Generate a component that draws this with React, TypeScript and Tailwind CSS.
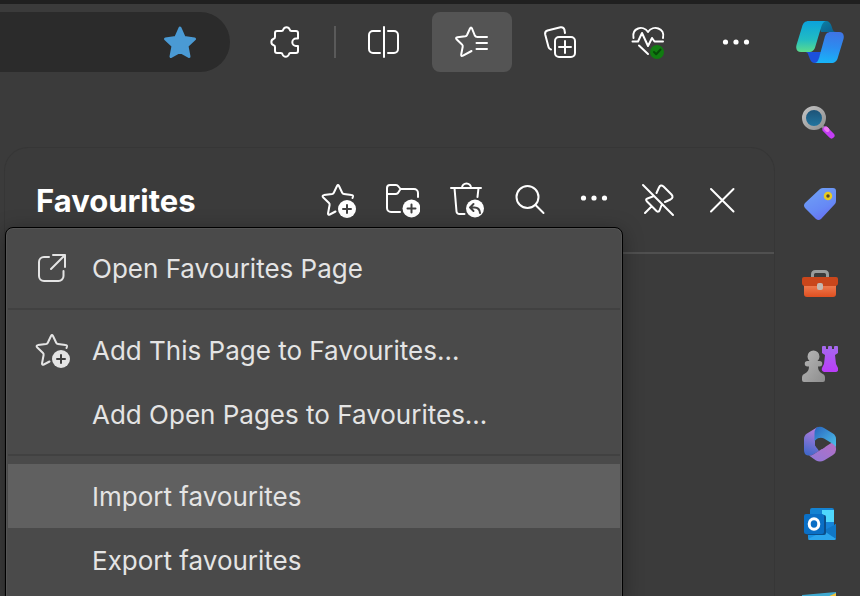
import type { ReactNode } from "react";

type IconProps = { className?: string };

const line = {
  fill: "none",
  stroke: "currentColor",
  strokeWidth: 2,
  strokeLinecap: "round",
  strokeLinejoin: "round",
} as const;

/* Toolbar icons */
const PuzzleIcon = () => (
  <svg viewBox="0 0 36 36" className="size-9" {...line}>
    <path d="M9 7h4.500q1.500 0 1.800-1.500a3.400 3.400 0 0 1 6.400 0Q22 7 23.500 7H28a2 2 0 0 1 2 2v5.500h-2a3.700 3.700 0 0 0 0 7.400h2V27a2 2 0 0 1-2 2h-5.500q-1.300 0-1.700 1.500a3.300 3.300 0 0 1-6.200 0Q14.200 29 12.900 29H9a2 2 0 0 1-2-2v-4q0-1.300-1.300-1.700a3.500 3.500 0 0 1 0-6.600Q7 14.300 7 13V9a2 2 0 0 1 2-2z" />
  </svg>
);

const SplitIcon = () => (
  <svg viewBox="0 0 36 36" className="size-9" {...line}>
    <path d="M18 3v30M14 7H7a4 4 0 0 0-4 4v14a4 4 0 0 0 4 4h7M22 7h6a4 4 0 0 1 4 4v14a4 4 0 0 1-4 4h-6" />
  </svg>
);

const StarListIcon = () => (
  <svg viewBox="0 0 36 36" className="size-9" {...line}>
    <path d="M33 13H23.500Q21.500 13 20.800 11.500L18 4.500Q17 2.500 16 4.500L13 11Q12.500 12 11.400 12.200L3.500 13.300Q1 13.800 2.800 15.600L8 20.500Q9 21.300 8.700 22.700L7.200 30.500Q7 32.600 9 31.600L17.500 27M22.500 19H33M22.500 25H33" />
  </svg>
);

const CollectionsIcon = () => (
  <svg viewBox="0 0 36 36" className="size-9" {...line}>
    <rect x="13" y="13" width="20" height="20" rx="4" />
    <path d="M23 17v12M17 23h12M9 25.500Q7 25 6.500 23L3.200 10.500Q2.500 7.500 5.500 6.500L18.500 3.300Q21.500 2.800 22.400 5.500L23 9" />
  </svg>
);

const HealthIcon = () => (
  <svg viewBox="0 0 36 36" className="size-9" {...line}>
    <path d="M3.500 14C1.500 4 13 .5 18 8C23 .5 35.500 4 33 14M2.500 17.500H8l4-8.500 6 13 4-8 2.500 3.500h8.500M9 21.500l9 8.500" />
    <circle cx="27" cy="28" r="7" fill="#107c10" stroke="none" />
    <path d="M24 28l2.200 2.200L30.500 25.500" stroke="#064b08" />
  </svg>
);

const DotsIcon = () => (
  <svg viewBox="0 0 36 36" className="size-9" fill="currentColor">
    <circle cx="7.500" cy="18" r="2.600" />
    <circle cx="18" cy="18" r="2.600" />
    <circle cx="28.500" cy="18" r="2.600" />
  </svg>
);

/* Panel icons */
const StarAddIcon = ({ className = "size-9" }: IconProps) => (
  <svg viewBox="0 0 36 36" className={className} {...line}>
    <path d="M32.500 16L33 14.500Q33.200 13.300 31.500 13.100L24 12Q22.800 11.800 22.200 10.700L19 4Q18 2.200 17 4L13.800 10.700Q13.200 11.800 12 12L4 13.100Q1.600 13.700 3.300 15.500L9 21Q9.800 21.800 9.600 23L8 31.500Q8 33.400 9.800 32.500L15.500 29.500" />
    <circle cx="27" cy="27" r="9" fill="currentColor" stroke="none" />
    <path d="M27 23v8M23 27h8" className="stroke-[#404040]" />
  </svg>
);

const FolderAddIcon = () => (
  <svg viewBox="0 0 36 36" className="size-9" {...line}>
    <path d="M3 12h8.500Q13 12 14 11l2.500-4H30a4 4 0 0 1 4 4v4M16.500 7l-2-2.500Q13.500 3 12 3H6a3 3 0 0 0-3 3v20a4 4 0 0 0 4 4h9" />
    <circle cx="27.500" cy="26.500" r="9" fill="currentColor" stroke="none" />
    <path d="M27.500 22.500v8M23.500 26.500h8" className="stroke-[#404040]" />
  </svg>
);

const TrashUndoIcon = () => (
  <svg viewBox="0 0 36 36" className="size-9" {...line}>
    <path d="M3 6h30M14 6a4.500 4.500 0 0 1 9 0M6.500 6l2 23.500Q8.800 32 11.500 32h5M30.500 6l-1 9" />
    <circle cx="27" cy="26.500" r="9" fill="currentColor" stroke="none" />
    <path d="M25.500 22L22 25.500l3.500 3.500M22 25.500h4.500Q31.500 25.500 32 31" className="stroke-[#404040]" />
  </svg>
);

const SearchIcon = () => (
  <svg viewBox="0 0 36 36" className="size-9" {...line}>
    <circle cx="15.500" cy="15" r="11" />
    <path d="M23.500 23L31.500 31" />
  </svg>
);

const MoreIcon = () => (
  <svg viewBox="0 0 36 36" className="size-9" fill="currentColor">
    <circle cx="7.500" cy="16" r="2.600" />
    <circle cx="18" cy="16" r="2.600" />
    <circle cx="28.500" cy="16" r="2.600" />
  </svg>
);

const UnpinIcon = () => (
  <svg viewBox="0 0 36 36" className="size-9" {...line}>
    <path d="M3 3l30 30M16.500 11l2.500-5.500Q20.500 2 23.500 4.500L31.500 12.500Q34 15.500 30.500 17.500L25 20M14 14l-6.500 2.500Q5 17.500 7 19.500L16.500 29Q18.500 30.500 19.500 28.500L22 22M11.500 24.500L5 31" />
  </svg>
);

const CloseIcon = () => (
  <svg viewBox="0 0 36 36" className="size-9" {...line}>
    <path d="M7 7l22.500 22.500M29.500 7L7 29.500" />
  </svg>
);

const OpenIcon = () => (
  <svg viewBox="0 0 36 36" className="size-9" {...line}>
    <path d="M15 7H10a5 5 0 0 0-5 5v14a5 5 0 0 0 5 5h14.500a5 5 0 0 0 5-5v-5M19 5h12v12M31 5L17 19" />
  </svg>
);

/* Sidebar icons */
const CopilotIcon = () => (
  <svg viewBox="0 0 48 44" className="h-11 w-12">
    <defs>
      <linearGradient id="cpLeft" x1=".5" y1="0" x2=".5" y2="1">
        <stop offset="0" stopColor="#0ba2dc" />
        <stop offset=".6" stopColor="#22bcc2" />
        <stop offset="1" stopColor="#5cdb8c" />
      </linearGradient>
      <linearGradient id="cpRight" x1=".6" y1="0" x2=".5" y2="1">
        <stop offset="0" stopColor="#3f74e4" />
        <stop offset=".5" stopColor="#2c8cf0" />
        <stop offset="1" stopColor="#18b4f8" />
      </linearGradient>
      <linearGradient id="cpTop" x1="0" y1="0" x2="1" y2="1">
        <stop offset="0" stopColor="#0b83a6" />
        <stop offset="1" stopColor="#0c5c8c" />
      </linearGradient>
    </defs>
    <path d="M22 1h8c3 0 4.500 2 5.500 5l1 3c.6 2 1.500 3 4 3H25z" fill="url(#cpTop)" />
    <path d="M8 32h17l-3 11h-3c-3 0-4.500-2-5.500-5l-1.500-4c-.5-1.500-1.500-2-4-2z" fill="#1c50dc" />
    <path d="M13 1h18c-3 0-4.500 2-5.500 5l-6 20c-1 4-3 6-7 6H5c-4 0-5.500-3-4.500-7L6 7c1-4 3-6 7-6z" fill="url(#cpLeft)" />
    <path d="M35 12h8c4 0 5.500 3 4.500 7L42 37c-1 4-3 6-7 6H18c3 0 4-2 5-5l5.500-20c1-4 2.500-6 6.500-6z" fill="url(#cpRight)" />
  </svg>
);

const LensIcon = () => (
  <svg viewBox="0 0 36 36" className="size-9">
    <defs>
      <linearGradient id="lensRim" x1="0" y1="0" x2="1" y2="1">
        <stop offset="0" stopColor="#c0c0c0" />
        <stop offset="1" stopColor="#929292" />
      </linearGradient>
      <linearGradient id="lensGlass" x1="0" y1="0" x2="0" y2="1">
        <stop offset="0" stopColor="#1c4f72" />
        <stop offset="1" stopColor="#2279a4" />
      </linearGradient>
    </defs>
    <path d="M18.500 18.500l4 4" stroke="#8d8d8d" strokeWidth="3" />
    <circle cx="12" cy="12" r="10" fill="url(#lensGlass)" stroke="url(#lensRim)" strokeWidth="4" />
    <path d="M23.500 23.500l6 6" stroke="#c43df5" strokeWidth="6" strokeLinecap="round" />
    <path d="M24 22.500l1.500 1.500" stroke="#ee79f5" strokeWidth="4" strokeLinecap="round" />
  </svg>
);

const TagIcon = () => (
  <svg viewBox="0 0 36 36" className="size-9">
    <defs>
      <linearGradient id="tagBody" x1=".3" y1="0" x2=".8" y2="1">
        <stop offset="0" stopColor="#6f9ff5" />
        <stop offset=".6" stopColor="#6689f5" />
        <stop offset="1" stopColor="#676af2" />
      </linearGradient>
    </defs>
    <path d="M18 3Q19.500 2 21 2h10q3 0 3 3v10q0 2-1.500 3.500L19 33q-2.500 2-5 0L3 22q-2-2.500 0-5z" fill="url(#tagBody)" />
    <circle cx="26" cy="10" r="3" fill="#574a2d" stroke="#e8cb20" strokeWidth="2.500" />
  </svg>
);

const ToolboxIcon = () => (
  <svg viewBox="0 0 36 36" className="size-9">
    <defs>
      <linearGradient id="boxBody" x1="0" y1="0" x2="0" y2="1">
        <stop offset="0" stopColor="#ef8055" />
        <stop offset="1" stopColor="#df4f20" />
      </linearGradient>
    </defs>
    <path d="M10.500 13V8.500Q10.500 5.500 13.500 5.500h9q3 0 3 3V13" fill="none" stroke="#999c9c" strokeWidth="3" />
    <path d="M2 18h32v10q0 3-3 3H5q-3 0-3-3z" fill="url(#boxBody)" />
    <path d="M2 11h32q2 0 2 2v4q0 3-3 3H3q-3 0-3-3v-4q0-2 2-2z" fill="#c9461b" />
    <rect x="15" y="17" width="6" height="7" rx="2" fill="#c3b8b1" />
  </svg>
);

const ChessIcon = () => (
  <svg viewBox="0 0 36 36" className="size-9">
    <defs>
      <linearGradient id="rook" x1="0" y1="0" x2="0" y2="1">
        <stop offset="0" stopColor="#a56bee" />
        <stop offset="1" stopColor="#ba3cf9" />
      </linearGradient>
      <linearGradient id="pawn" x1="0" y1="0" x2="1" y2="1">
        <stop offset="0" stopColor="#b8b8b8" />
        <stop offset="1" stopColor="#8d8d8d" />
      </linearGradient>
    </defs>
    <path d="M20 1q0-1 1-1h2q1 0 1 1v2h2V1q0-1 1-1h2q1 0 1 1v2h2V1q0-1 1-1h2q1 0 1 1v6l-3 2 1 9 2 4q1 3-2 4H22q-3-1-2-4l2-4 1-9-3-2z" fill="url(#rook)" />
    <path d="M7.500 15a6 6 0 1 1 8 0h2a2.500 2.500 0 0 1 0 5.500H16q0 5 4 7 3 1 3 4V34q0 2-2 2H2q-2 0-2-2v-2.500q0-3 3-4 4-2 4-7H5.500a2.500 2.500 0 0 1 0-5.500z" fill="url(#pawn)" />
  </svg>
);

const OfficeIcon = () => (
  <svg viewBox="0 0 36 36" className="size-9">
    <defs>
      <linearGradient id="ofLeft" x1=".5" y1="0" x2=".3" y2="1">
        <stop offset="0" stopColor="#b47ddd" />
        <stop offset="1" stopColor="#3f67c9" />
      </linearGradient>
      <linearGradient id="ofRight" x1="0" y1="0" x2="1" y2="1">
        <stop offset="0" stopColor="#2864be" />
        <stop offset="1" stopColor="#4fc4ec" />
      </linearGradient>
      <linearGradient id="ofBottom" x1="0" y1="1" x2="1" y2="0">
        <stop offset="0" stopColor="#8e78d8" />
        <stop offset="1" stopColor="#b66fc4" />
      </linearGradient>
    </defs>
    <path d="M14 2L5 7.500Q2 9.500 2 13v11q0 5 4 5.500 3 .5 6-1.500l5-3-4-6V8q0-4 3-7.200z" fill="url(#ofLeft)" />
    <path d="M7 29.500q3 0 5-1.500l18-11.500q4 2 4 6V24q0 3-3 5l-9 5.500q-4 2-8 0z" fill="url(#ofBottom)" />
    <path d="M14 2q4-2.500 8 0l9 5.500q3 2 3 5.500v9q0-2-3-4l-9-5.500Q17 10 12.500 15V8q0-4 1.500-6z" fill="url(#ofRight)" />
    <circle cx="18.500" cy="17.500" r="5.500" fill="#3b3b3b" />
  </svg>
);

const OutlookIcon = () => (
  <svg viewBox="0 0 36 36" className="size-9">
    <path d="M8 4q0-2 2-2h20q2 0 2 2v18H8z" fill="#1483d2" />
    <path d="M20 4h12v12H20z" fill="#4fd8fd" />
    <path d="M20 16h12v8H20z" fill="#1683d8" />
    <path d="M6 18l16 8 12-8v14q0 2-2 2H8q-2 0-2-2z" fill="#1a91e2" />
    <path d="M34 18v15L21 25z" fill="#1077c6" />
    <path d="M6 33l16-8 12 8q-1 1-2 1H8q-1 0-2-1z" fill="#2ba5ec" />
    <rect x="4" y="9" width="20" height="20" rx="2" fill="#0b4f8b" />
    <rect x="2" y="8" width="20" height="20" rx="2" fill="#0a6fc5" />
    <ellipse cx="12" cy="18" rx="4.800" ry="5.200" fill="none" stroke="#fff" strokeWidth="3" />
  </svg>
);

const DropIcon = () => (
  <svg viewBox="0 0 36 36" className="size-9">
    <path d="M0 9L34 6v24L0 33z" fill="#3fa9d0" />
    <path d="M23 12L34 7v5L25 18z" fill="#f2c238" />
  </svg>
);

const actions: { label: string; icon: ReactNode; active?: boolean }[] = [
  { label: "Split screen", icon: <SplitIcon /> },
  { label: "Favourites", icon: <StarListIcon />, active: true },
  { label: "Collections", icon: <CollectionsIcon /> },
  { label: "Browser essentials", icon: <HealthIcon /> },
  { label: "Settings and more", icon: <DotsIcon /> },
];

const panelActions = [
  { label: "Add this page", icon: <StarAddIcon /> },
  { label: "Add folder", icon: <FolderAddIcon /> },
  { label: "Restore deleted", icon: <TrashUndoIcon /> },
  { label: "Search favourites", icon: <SearchIcon /> },
  { label: "More options", icon: <MoreIcon /> },
  { label: "Unpin", icon: <UnpinIcon /> },
  { label: "Close", icon: <CloseIcon /> },
];

const apps = [
  { label: "Search", icon: <LensIcon /> },
  { label: "Shopping", icon: <TagIcon /> },
  { label: "Tools", icon: <ToolboxIcon /> },
  { label: "Games", icon: <ChessIcon /> },
  { label: "Microsoft 365", icon: <OfficeIcon /> },
  { label: "Outlook", icon: <OutlookIcon /> },
  { label: "Drop", icon: <DropIcon /> },
];

function Toolbar() {
  return (
    <div className="flex items-center gap-2 pt-2 pr-1">
      {/* Address bar */}
      <div className="mr-2 flex h-15 flex-1 items-center justify-end rounded-r-full bg-[#2b2b2b] pr-8">
        <button aria-label="Edit favourite">
          <svg viewBox="0 0 36 36" className="size-9" fill="#4a9ad4" stroke="#4a9ad4" strokeWidth="3" strokeLinejoin="round">
            <path d="M18 4l4.200 9.500L32.500 15l-7.500 7 2 10.500L18 27.500 9 32.500 11 22 3.500 15l10.300-1.500z" />
          </svg>
        </button>
      </div>
      <button aria-label="Extensions" className="flex h-15 w-20 items-center justify-center">
        <PuzzleIcon />
      </button>
      <div className="h-8 w-0.5 bg-[#5a5a5a]" />
      {actions.map((a) => (
        <button
          key={a.label}
          aria-label={a.label}
          className={`flex h-15 w-20 items-center justify-center rounded-lg ${a.active ? "bg-[#545454]" : ""}`}
        >
          {a.icon}
        </button>
      ))}
    </div>
  );
}

function MenuItem({ icon, active, children }: { icon?: ReactNode; active?: boolean; children: ReactNode }) {
  return (
    <button
      role="menuitem"
      className={`flex h-16 w-full items-center gap-[22px] pl-[26px] text-left text-[26px] text-[#e4e4e4] ${active ? "bg-[#606060]" : ""}`}
    >
      <span className="size-9">{icon}</span>
      <span>{children}</span>
    </button>
  );
}

function FavouritesMenu() {
  return (
    <div
      role="menu"
      className="absolute top-[79px] left-0 w-[618px] rounded-t-lg border border-black bg-[#4a4a4a] px-0.5 py-2 shadow-[0_4px_20px_rgba(0,0,0,0.35)] inset-ring inset-ring-[#545454]"
    >
      <MenuItem icon={<OpenIcon />}>Open Favourites Page</MenuItem>
      <hr className="my-2 border-t-2 border-[#414141]" />
      <MenuItem icon={<StarAddIcon />}>Add This Page to Favourites…</MenuItem>
      <MenuItem>Add Open Pages to Favourites…</MenuItem>
      <hr className="my-2 border-t-2 border-[#414141]" />
      <MenuItem active>Import favourites</MenuItem>
      <MenuItem>Export favourites</MenuItem>
    </div>
  );
}

function FavouritesPanel() {
  return (
    <section className="relative mt-[75px] mr-[5px] ml-1 flex-1 rounded-t-3xl border border-b-0 border-[#363636]">
      <header className="flex h-[106px] items-center border-b-2 border-[#505050] pr-5 pl-[31px] text-white">
        <h1 className="flex-1 pt-0.5 text-[31px] font-bold">Favourites</h1>
        {panelActions.map((a) => (
          <button key={a.label} aria-label={a.label} className="flex h-16 w-16 items-center justify-center">
            {a.icon}
          </button>
        ))}
      </header>
      <FavouritesMenu />
    </section>
  );
}

export default function App() {
  return (
    <div className="flex h-screen overflow-hidden border-t-4 border-[#202020] bg-[#3b3b3b] font-['Inter',sans-serif] text-white">
      <main className="flex flex-1 flex-col">
        <Toolbar />
        <FavouritesPanel />
      </main>

      {/* Sidebar */}
      <aside className="flex w-20 shrink-0 flex-col">
        <button aria-label="Copilot" className="mb-1 flex h-19 shrink-0 items-center justify-center">
          <CopilotIcon />
        </button>
        {apps.map((a) => (
          <button key={a.label} aria-label={a.label} className="flex h-20 shrink-0 items-center justify-center">
            {a.icon}
          </button>
        ))}
      </aside>
    </div>
  );
}
